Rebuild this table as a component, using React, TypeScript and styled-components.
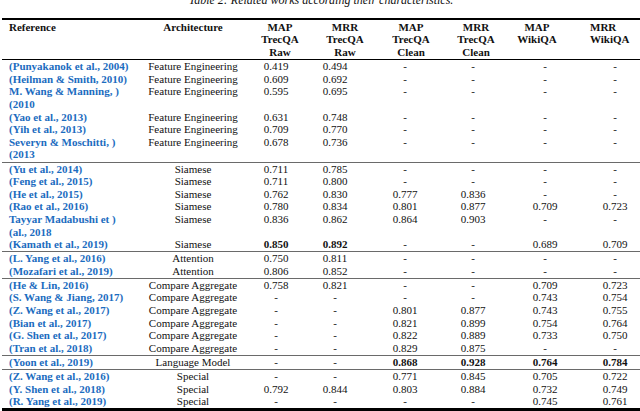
import React from 'react';
import styled, {createGlobalStyle} from "styled-components";

const GlobalStyle = createGlobalStyle`
  html, body {
    margin: 0;
    padding: 0;
    background: #fff;
  }
  body {
    font-family: "Liberation Serif", "Times New Roman", serif;
    color: #111;
  }
`

type Row = {
    ref: string[];
    arch: string;
    values: string[];
    bold?: boolean[];
}

const COLUMNS = "138px 106px 60px 58px 82px 54px 90px 50px";

const Page = styled.div`
  width: 640px;
  height: 411px;
  overflow: hidden;
`

const Caption = styled.div`
  margin: -7px 0 0 2px;
  width: 638px;
  text-align: center;
  font-style: italic;
  font-size: 12px;
  line-height: 14px;
  white-space: nowrap;
`

const Table = styled.div`
  margin: 11px 0 0 2px;
  width: 638px;
  border-top: 2px solid #000;
  border-bottom: 3px solid #000;
  font-size: 11px;
  line-height: 12.6px;
`

const HeaderRow = styled.div`
  display: grid;
  grid-template-columns: ${COLUMNS};
  padding: 0.5px 0 1px;
  border-bottom: 1px solid #000;
  font-weight: bold;
`

const HeadCell = styled.div<{ $shift?: number; $left?: boolean }>`
  text-align: ${p => p.$left ? "left" : "center"};
  white-space: nowrap;
  padding-left: ${p => p.$left ? 7 : Math.max(0, (p.$shift || 0) * 2)}px;
  padding-right: ${p => Math.max(0, -(p.$shift || 0) * 2)}px;
`

const Section = styled.div<{ $first?: boolean }>`
  padding-bottom: 0.5px;
  border-top: ${p => p.$first ? "none" : "1px solid #6a6a6a"};
`

const DataRow = styled.div`
  display: grid;
  grid-template-columns: ${COLUMNS};
`

const RefCell = styled.div`
  padding-left: 7px;
  color: #1b6cc0;
  font-weight: bold;
  white-space: nowrap;
`

const Cell = styled.div<{ $bold?: boolean }>`
  text-align: center;
  white-space: nowrap;
  font-weight: ${p => p.$bold ? "bold" : "normal"};
`

const headers: { lines: string[]; shift: number }[] = [
    {lines: ["MAP", "TrecQA", "Raw"], shift: 4},
    {lines: ["MRR", "TrecQA", "Raw"], shift: 10},
    {lines: ["MAP", "TrecQA", "Clean"], shift: 6},
    {lines: ["MRR", "TrecQA", "Clean"], shift: 3},
    {lines: ["MAP", "WikiQA"], shift: -8},
    {lines: ["MRR", "WikiQA"], shift: -13},
];

const sections: Row[][] = [
    [
        {ref: ["(Punyakanok et al., 2004)"], arch: "Feature Engineering", values: ["0.419", "0.494", "-", "-", "-", "-"]},
        {ref: ["(Heilman & Smith, 2010)"], arch: "Feature Engineering", values: ["0.609", "0.692", "-", "-", "-", "-"]},
        {ref: ["M. Wang & Manning, )", "(2010"], arch: "Feature Engineering", values: ["0.595", "0.695", "-", "-", "-", "-"]},
        {ref: ["(Yao et al., 2013)"], arch: "Feature Engineering", values: ["0.631", "0.748", "-", "-", "-", "-"]},
        {ref: ["(Yih et al., 2013)"], arch: "Feature Engineering", values: ["0.709", "0.770", "-", "-", "-", "-"]},
        {ref: ["Severyn & Moschitti, )", "(2013"], arch: "Feature Engineering", values: ["0.678", "0.736", "-", "-", "-", "-"]},
    ],
    [
        {ref: ["(Yu et al., 2014)"], arch: "Siamese", values: ["0.711", "0.785", "-", "-", "-", "-"]},
        {ref: ["(Feng et al., 2015)"], arch: "Siamese", values: ["0.711", "0.800", "-", "-", "-", "-"]},
        {ref: ["(He et al., 2015)"], arch: "Siamese", values: ["0.762", "0.830", "0.777", "0.836", "-", "-"]},
        {ref: ["(Rao et al., 2016)"], arch: "Siamese", values: ["0.780", "0.834", "0.801", "0.877", "0.709", "0.723"]},
        {ref: ["Tayyar Madabushi et )", "(al., 2018"], arch: "Siamese", values: ["0.836", "0.862", "0.864", "0.903", "-", "-"]},
        {
            ref: ["(Kamath et al., 2019)"], arch: "Siamese", values: ["0.850", "0.892", "-", "-", "0.689", "0.709"],
            bold: [true, true, false, false, false, false]
        },
    ],
    [
        {ref: ["(L. Yang et al., 2016)"], arch: "Attention", values: ["0.750", "0.811", "-", "-", "-", "-"]},
        {ref: ["(Mozafari et al., 2019)"], arch: "Attention", values: ["0.806", "0.852", "-", "-", "-", "-"]},
    ],
    [
        {ref: ["(He & Lin, 2016)"], arch: "Compare Aggregate", values: ["0.758", "0.821", "-", "-", "0.709", "0.723"]},
        {ref: ["(S. Wang & Jiang, 2017)"], arch: "Compare Aggregate", values: ["-", "-", "-", "-", "0.743", "0.754"]},
        {ref: ["(Z. Wang et al., 2017)"], arch: "Compare Aggregate", values: ["-", "-", "0.801", "0.877", "0.743", "0.755"]},
        {ref: ["(Bian et al., 2017)"], arch: "Compare Aggregate", values: ["-", "-", "0.821", "0.899", "0.754", "0.764"]},
        {ref: ["(G. Shen et al., 2017)"], arch: "Compare Aggregate", values: ["-", "-", "0.822", "0.889", "0.733", "0.750"]},
        {ref: ["(Tran et al., 2018)"], arch: "Compare Aggregate", values: ["-", "-", "0.829", "0.875", "-", "-"]},
    ],
    [
        {
            ref: ["(Yoon et al., 2019)"], arch: "Language Model", values: ["-", "-", "0.868", "0.928", "0.764", "0.784"],
            bold: [false, false, true, true, true, true]
        },
    ],
    [
        {ref: ["(Z. Wang et al., 2016)"], arch: "Special", values: ["-", "-", "0.771", "0.845", "0.705", "0.722"]},
        {ref: ["(Y. Shen et al., 2018)"], arch: "Special", values: ["0.792", "0.844", "0.803", "0.884", "0.732", "0.749"]},
        {ref: ["(R. Yang et al., 2019)"], arch: "Special", values: ["-", "-", "-", "-", "0.745", "0.761"]},
    ],
];

const lines = (items: string[]) => items.map((line, i) => <div key={i}>{line}</div>);

const App = () => {
    return (
        <Page>
            <GlobalStyle/>
            <Caption>Table 2: Related works according their characteristics.</Caption>
            <Table>
                <HeaderRow>
                    <HeadCell $left>Reference</HeadCell>
                    <HeadCell>Architecture</HeadCell>
                    {headers.map((h, i) => <HeadCell key={i} $shift={h.shift}>{lines(h.lines)}</HeadCell>)}
                </HeaderRow>
                {sections.map((rows, s) => (
                    <Section key={s} $first={s === 0}>
                        {rows.map((row, r) => (
                            <DataRow key={r}>
                                <RefCell>{lines(row.ref)}</RefCell>
                                <Cell>{row.arch}</Cell>
                                {row.values.map((v, i) => (
                                    <Cell key={i} $bold={row.bold?.[i]}>{v}</Cell>
                                ))}
                            </DataRow>
                        ))}
                    </Section>
                ))}
            </Table>
        </Page>
    );
}

export default App;
